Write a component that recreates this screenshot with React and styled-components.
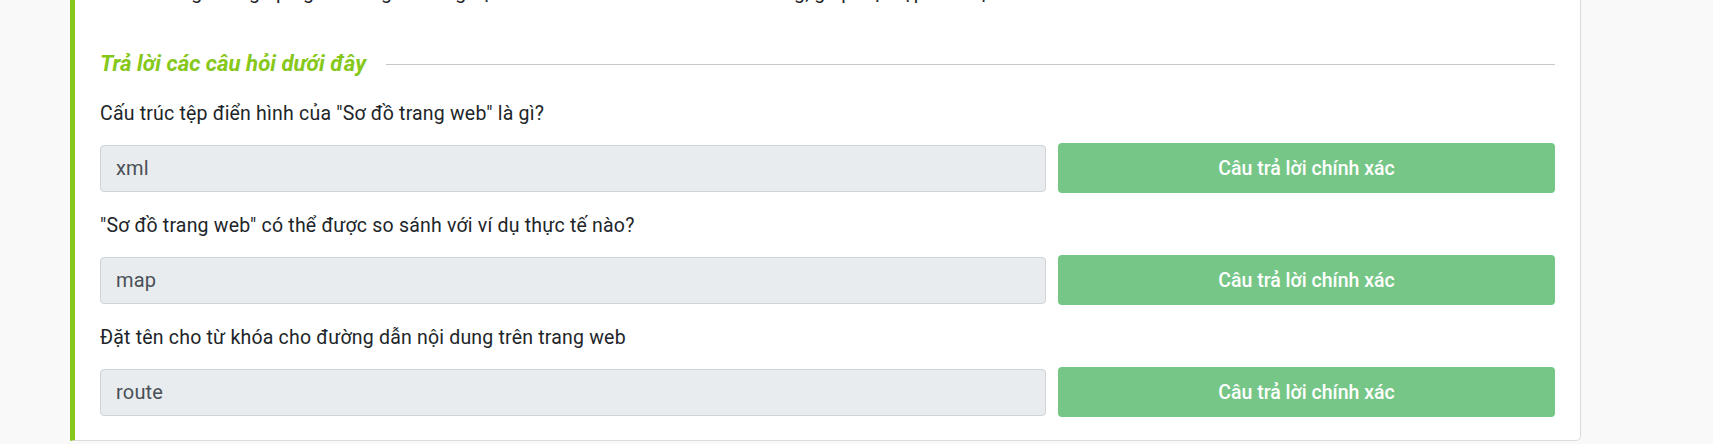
import React from 'react';
import styled, { createGlobalStyle } from 'styled-components';

const GlobalStyle = createGlobalStyle`
  html, body {
    margin: 0;
    padding: 0;
    background: #f9f9f9;
    font-family: Roboto, "Noto Sans", sans-serif;
    overflow: hidden;
  }
`;

const questions = [
  { id: 1, text: 'Cấu trúc tệp điển hình của "Sơ đồ trang web" là gì?', answer: 'xml' },
  { id: 2, text: '"Sơ đồ trang web" có thể được so sánh với ví dụ thực tế nào?', answer: 'map' },
  { id: 3, text: 'Đặt tên cho từ khóa cho đường dẫn nội dung trên trang web', answer: 'route' },
];

const Page = styled.div`
  display: flex;
  padding-left: 70px;
  margin-top: -21px;
`;

const Card = styled.div`
  width: 1511px;
  box-sizing: border-box;
  background: #fff;
  border: 1px solid #dcdcdc;
  border-left: 5px solid #86c81a;
  border-radius: 0 0 5px 0;
  padding: 0 25px 23px 25px;
`;

const Intro = styled.p`
  margin: 0 0 42px;
  font-size: 19.5px;
  line-height: 26px;
  letter-spacing: 0.2px;
  color: #212529;
  white-space: nowrap;
`;

const SectionHead = styled.div`
  display: flex;
  align-items: center;
  gap: 20px;
  margin-bottom: 23px;
`;

const SectionTitle = styled.h3`
  margin: 0;
  font-size: 22.2px;
  line-height: 30px;
  font-weight: 700;
  font-style: italic;
  color: #86c81a;
  white-space: nowrap;
`;

const Rule = styled.div`
  flex: 1;
  height: 1px;
  background: #c8c8c8;
  margin-top: 2px;
`;

const QuestionBlock = styled.div`
  margin-bottom: 20px;
  &:last-child {
    margin-bottom: 0;
  }
`;

const QuestionText = styled.div`
  font-size: 19.5px;
  line-height: 26px;
  letter-spacing: 0.2px;
  color: #212529;
  margin-bottom: 16px;
`;

const AnswerRow = styled.div`
  display: flex;
  align-items: center;
  gap: 12px;
  height: 50px;
`;

const AnswerInput = styled.input`
  flex: 1;
  height: 47px;
  box-sizing: border-box;
  border: 1px solid #ced4da;
  border-radius: 4px;
  background: #e9ecef;
  padding: 0 15px;
  font-family: inherit;
  font-size: 20px;
  letter-spacing: 0.2px;
  color: #495057;
  outline: none;
`;

const RevealButton = styled.button`
  width: 497px;
  height: 50px;
  border: none;
  border-radius: 4px;
  background: #75c687;
  color: #fff;
  font-family: inherit;
  font-size: 19.5px;
  font-weight: 500;
  cursor: pointer;
`;

export default function App() {
  return (
    <>
      <GlobalStyle />
      <Page>
        <Card>
          <Intro>
            Sơ đồ trang web giúp người dùng và công cụ tìm kiếm hiểu rõ cấu trúc của trang, giúp việc lập chỉ mục nhanh hơn.
          </Intro>
          <SectionHead>
            <SectionTitle>Trả lời các câu hỏi dưới đây</SectionTitle>
            <Rule />
          </SectionHead>
          {questions.map((q) => (
            <QuestionBlock key={q.id}>
              <QuestionText>{q.text}</QuestionText>
              <AnswerRow>
                <AnswerInput type="text" value={q.answer} readOnly />
                <RevealButton type="button">Câu trả lời chính xác</RevealButton>
              </AnswerRow>
            </QuestionBlock>
          ))}
        </Card>
      </Page>
    </>
  );
}
